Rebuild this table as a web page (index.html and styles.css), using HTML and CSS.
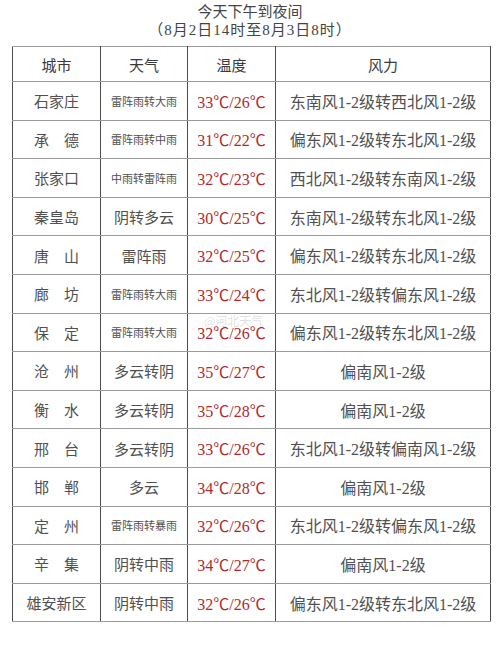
FILE: index.html
```html
<!DOCTYPE html>
<html lang="zh-CN">
<head>
<meta charset="utf-8">
<title>今天下午到夜间</title>
<link rel="stylesheet" href="styles.css">
</head>
<body>
<div class="page">
  <div class="title">
    <div class="t1">今天下午到夜间</div>
    <div class="t2">（8月2日14时至8月3日8时）</div>
  </div>
  <table class="wx">
    <colgroup>
      <col class="c1"><col class="c2"><col class="c3"><col class="c4">
    </colgroup>
    <thead>
      <tr><th>城市</th><th>天气</th><th>温度</th><th>风力</th></tr>
    </thead>
    <tbody>
      <tr><td class="city">石家庄</td><td class="w sm">雷阵雨转大雨</td><td class="temp">33℃/26℃</td><td class="wind">东南风1-2级转西北风1-2级</td></tr>
      <tr><td class="city">承　德</td><td class="w sm">雷阵雨转中雨</td><td class="temp">31℃/22℃</td><td class="wind">偏东风1-2级转东北风1-2级</td></tr>
      <tr><td class="city">张家口</td><td class="w sm">中雨转雷阵雨</td><td class="temp">32℃/23℃</td><td class="wind">西北风1-2级转东南风1-2级</td></tr>
      <tr><td class="city">秦皇岛</td><td class="w">阴转多云</td><td class="temp">30℃/25℃</td><td class="wind">东南风1-2级转东北风1-2级</td></tr>
      <tr><td class="city">唐　山</td><td class="w">雷阵雨</td><td class="temp">32℃/25℃</td><td class="wind">偏东风1-2级转东北风1-2级</td></tr>
      <tr><td class="city">廊　坊</td><td class="w sm">雷阵雨转大雨</td><td class="temp">33℃/24℃</td><td class="wind">东北风1-2级转偏东风1-2级</td></tr>
      <tr><td class="city">保　定</td><td class="w sm">雷阵雨转大雨</td><td class="temp">32℃/26℃</td><td class="wind">偏东风1-2级转东北风1-2级</td></tr>
      <tr><td class="city">沧　州</td><td class="w">多云转阴</td><td class="temp">35℃/27℃</td><td class="wind">偏南风1-2级</td></tr>
      <tr><td class="city">衡　水</td><td class="w">多云转阴</td><td class="temp">35℃/28℃</td><td class="wind">偏南风1-2级</td></tr>
      <tr><td class="city">邢　台</td><td class="w">多云转阴</td><td class="temp">33℃/26℃</td><td class="wind">东北风1-2级转偏南风1-2级</td></tr>
      <tr><td class="city">邯　郸</td><td class="w">多云</td><td class="temp">34℃/28℃</td><td class="wind">偏南风1-2级</td></tr>
      <tr><td class="city">定　州</td><td class="w sm">雷阵雨转暴雨</td><td class="temp">32℃/26℃</td><td class="wind">东北风1-2级转偏东风1-2级</td></tr>
      <tr><td class="city">辛　集</td><td class="w">阴转中雨</td><td class="temp">34℃/27℃</td><td class="wind">偏南风1-2级</td></tr>
      <tr><td class="city">雄安新区</td><td class="w">阴转中雨</td><td class="temp">32℃/26℃</td><td class="wind">偏东风1-2级转东北风1-2级</td></tr>
    </tbody>
  </table>
  <div class="watermark">@河北天气</div>
</div>
</body>
</html>
```
FILE: styles.css
```css
html, body {
  margin: 0;
  padding: 0;
  background: #ffffff;
}
body {
  font-family: "Liberation Serif", "Noto Sans CJK SC", serif;
  color: #505050;
}
.page {
  position: relative;
  width: 500px;
  height: 646px;
}
.title {
  padding-top: 3px;
  text-align: center;
  font-size: 15px;
  line-height: 18px;
  color: #444444;
}
.t2 {
  letter-spacing: 1px;
}
.wx {
  margin: 7px 0 0 12px;
  width: 478px;
  border-collapse: collapse;
  table-layout: fixed;
  border: 1px solid #8a8a8a;
}
.c1 { width: 88px; }
.c2 { width: 87px; }
.c3 { width: 88px; }
.c4 { width: 215px; }
.wx th, .wx td {
  padding: 0;
  text-align: center;
  vertical-align: middle;
  border-top: 1px solid #9a9a9a;
  border-bottom: 1px solid #9a9a9a;
  border-left: 1px solid #4a4a4a;
  border-right: 1px solid #4a4a4a;
  white-space: nowrap;
}
.wx th {
  height: 34px;
  font-weight: normal;
  font-size: 15px;
  color: #3a3a3a;
}
.wx tbody tr {
  height: 38.6px;
}
.city {
  font-size: 15px;
  color: #505050;
}
.w {
  font-size: 15px;
  color: #505050;
}
.w.sm {
  font-size: 11px;
}
.temp {
  font-size: 16px;
  color: #b0292e;
}
.wind {
  font-size: 16px;
  color: #505050;
}
.watermark {
  position: absolute;
  left: 204px;
  top: 312px;
  font-family: "Noto Sans CJK SC", sans-serif;
  font-size: 12px;
  color: rgba(150, 150, 150, 0.3);
}
```
